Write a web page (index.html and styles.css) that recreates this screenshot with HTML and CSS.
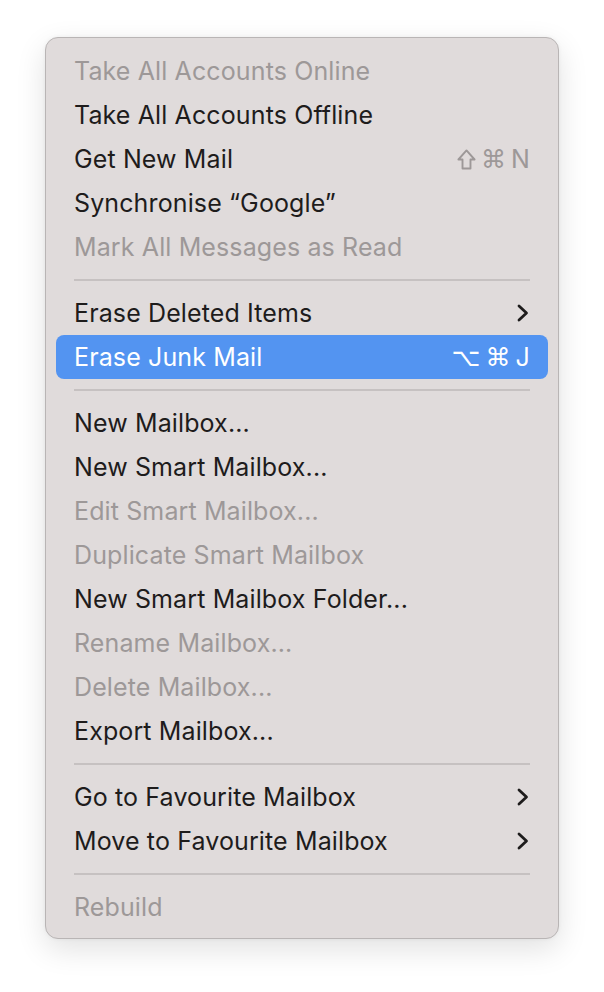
FILE: index.html
```html
<!DOCTYPE html>
<html lang="en">
<head>
    <meta charset="UTF-8">
    <meta name="viewport" content="width=device-width, initial-scale=1.0">
    <title>Mailbox Menu</title>
    <link rel="stylesheet" href="styles.css">
</head>
<body>
    <div class="menu">
        <div class="item disabled"><span>Take All Accounts Online</span></div>
        <div class="item"><span>Take All Accounts Offline</span></div>
        <div class="item">
            <span>Get New Mail</span>
            <span class="keys">
                <svg class="shift" viewBox="0 0 20 22" width="19" height="21"><path d="M10 1.5 L18.5 11 L14.2 11 L14.2 20.5 L5.8 20.5 L5.8 11 L1.5 11 Z"/></svg>
                <span class="key">⌘</span><span class="key letter">N</span>
            </span>
        </div>
        <div class="item"><span>Synchronise “Google”</span></div>
        <div class="item disabled"><span>Mark All Messages as Read</span></div>
        <div class="sep"></div>
        <div class="item">
            <span>Erase Deleted Items</span>
            <svg class="chevron" viewBox="0 0 12 18" width="12" height="18"><path d="M2 2 L9.5 9 L2 16"/></svg>
        </div>
        <div class="item active">
            <span>Erase Junk Mail</span>
            <span class="keys"><span class="key">⌥</span><span class="key">⌘</span><span class="key letter">J</span></span>
        </div>
        <div class="sep"></div>
        <div class="item"><span>New Mailbox...</span></div>
        <div class="item"><span>New Smart Mailbox...</span></div>
        <div class="item disabled"><span>Edit Smart Mailbox...</span></div>
        <div class="item disabled"><span>Duplicate Smart Mailbox</span></div>
        <div class="item"><span>New Smart Mailbox Folder...</span></div>
        <div class="item disabled"><span>Rename Mailbox...</span></div>
        <div class="item disabled"><span>Delete Mailbox...</span></div>
        <div class="item"><span>Export Mailbox...</span></div>
        <div class="sep"></div>
        <div class="item">
            <span>Go to Favourite Mailbox</span>
            <svg class="chevron" viewBox="0 0 12 18" width="12" height="18"><path d="M2 2 L9.5 9 L2 16"/></svg>
        </div>
        <div class="item">
            <span>Move to Favourite Mailbox</span>
            <svg class="chevron" viewBox="0 0 12 18" width="12" height="18"><path d="M2 2 L9.5 9 L2 16"/></svg>
        </div>
        <div class="sep"></div>
        <div class="item disabled"><span>Rebuild</span></div>
    </div>
</body>
</html>
```

FILE: styles.css
```css
:root {
    --menu-bg: #e0dbdb;
    --text: #1e1c1c;
    --text-disabled: #9d9898;
    --sep: #c6c1c1;
    --accent: #5394f1;
}

body {
    margin: 0;
    background-color: #fff;
    font-family: Inter, "Noto Sans", sans-serif;
    height: 100vh;
}

.menu {
    position: absolute;
    left: 45px;
    top: 37px;
    width: 514px;
    box-sizing: border-box;
    padding: 11px 0 9px;
    background-color: var(--menu-bg);
    border: 1px solid #b9b5b5;
    border-radius: 13px;
    box-shadow: 0 10px 30px rgba(0, 0, 0, 0.12), 0 0 4px rgba(0, 0, 0, 0.05);
}

.item {
    display: flex;
    justify-content: space-between;
    align-items: center;
    height: 44px;
    margin: 0 10px;
    padding: 0 18px 0 18px;
    border-radius: 8px;
    font-size: 25px;
    letter-spacing: 0.12px;
    color: var(--text);
}

.item.disabled {
    color: var(--text-disabled);
}

.item.active {
    background-color: var(--accent);
    color: #fff;
}

.keys {
    display: flex;
    align-items: center;
    gap: 5px;
    color: var(--text-disabled);
}

.item.active .keys {
    color: #fff;
}

.key {
    font-family: "DejaVu Sans", sans-serif;
    font-size: 25px;
}

.key.letter {
    font-family: Inter, sans-serif;
    font-size: 25px;
}

.shift {
    fill: none;
    stroke: var(--text-disabled);
    stroke-width: 2;
    stroke-linejoin: round;
}

.chevron {
    fill: none;
    stroke: var(--text);
    stroke-width: 2.8;
    stroke-linecap: round;
    stroke-linejoin: round;
    margin-right: 1px;
}

.sep {
    height: 2px;
    margin: 10px 28px;
    background-color: var(--sep);
}
```
